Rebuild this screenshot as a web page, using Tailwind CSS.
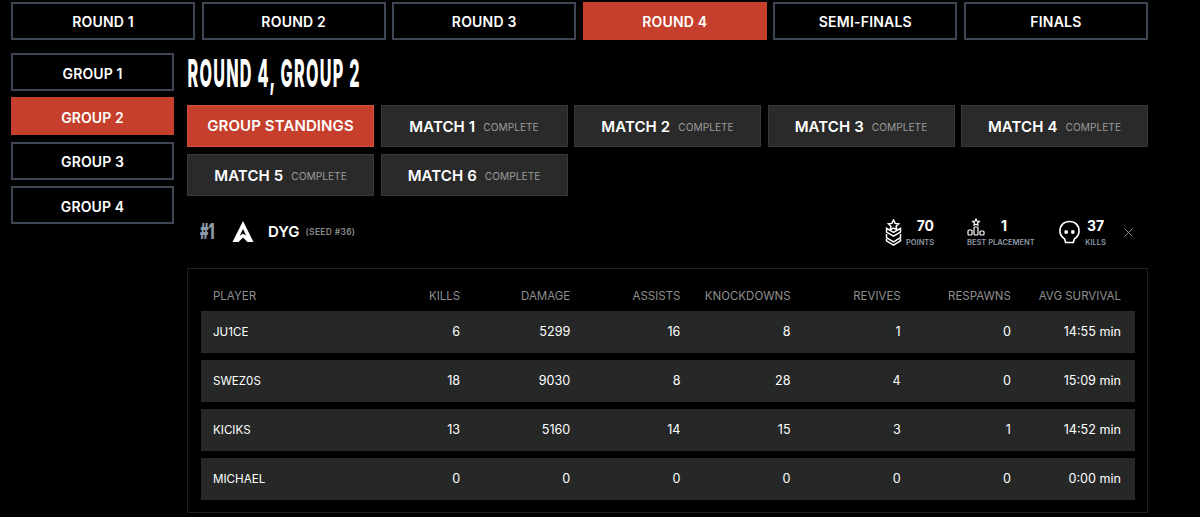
<!DOCTYPE html>
<html lang="en">
<head>
  <meta charset="UTF-8">
  <title>Round 4, Group 2</title>
  <script src="https://cdn.jsdelivr.net/npm/@tailwindcss/browser@4"></script>
</head>
<body class="bg-black text-white font-['Inter',sans-serif] h-[517px] overflow-hidden">
  <div class="w-[1148px] pl-[11px] pt-[2px]">
    <!-- rounds -->
    <nav class="grid grid-cols-6 gap-[6.4px] text-[14px] font-semibold tracking-[0.2px]">
      <a class="h-[38px] pt-[1px] flex items-center justify-center border-2 border-[#3e4653]">ROUND 1</a>
      <a class="h-[38px] pt-[1px] flex items-center justify-center border-2 border-[#3e4653]">ROUND 2</a>
      <a class="h-[38px] pt-[1px] flex items-center justify-center border-2 border-[#3e4653]">ROUND 3</a>
      <a class="h-[38px] pt-[1px] flex items-center justify-center bg-[#c63f2c]">ROUND 4</a>
      <a class="h-[38px] pt-[1px] flex items-center justify-center border-2 border-[#3e4653]">SEMI-FINALS</a>
      <a class="h-[38px] pt-[1px] flex items-center justify-center border-2 border-[#3e4653]">FINALS</a>
    </nav>

    <div class="flex mt-[13px]">
      <!-- groups -->
      <aside class="w-[163px] shrink-0 flex flex-col gap-[6.4px] text-[14px] font-semibold tracking-[0.1px]">
        <a class="h-[38px] pt-[2px] flex items-center justify-center border-2 border-[#3e4653]">GROUP 1</a>
        <a class="h-[38px] pt-[2px] flex items-center justify-center bg-[#c63f2c]">GROUP 2</a>
        <a class="h-[38px] pt-[2px] flex items-center justify-center border-2 border-[#3e4653]">GROUP 3</a>
        <a class="h-[38px] pt-[2px] flex items-center justify-center border-2 border-[#3e4653]">GROUP 4</a>
      </aside>

      <main class="flex-1 ml-[13px]">
        <h1 class="h-[52px] pl-[1px] font-extrabold text-[38px] leading-[41px] tracking-[3px] whitespace-nowrap origin-left scale-x-[0.425]">ROUND 4, GROUP 2</h1>

        <!-- matches -->
        <div class="grid grid-cols-5 gap-x-[6.5px] gap-y-[7px] text-[15px] font-semibold tracking-[0.1px]">
          <a class="h-[42px] pt-[1px] flex items-center justify-center bg-[#c63f2c] border border-[#d5513d]">GROUP STANDINGS</a>
          <a class="h-[42px] pt-[2px] flex items-center justify-center gap-[8px] bg-[#2a2a2a] border border-[#383838]">MATCH 1 <span class="mt-[2px] text-[10.2px] font-normal tracking-normal text-[#9a9a9a]">COMPLETE</span></a>
          <a class="h-[42px] pt-[2px] flex items-center justify-center gap-[8px] bg-[#2a2a2a] border border-[#383838]">MATCH 2 <span class="mt-[2px] text-[10.2px] font-normal tracking-normal text-[#9a9a9a]">COMPLETE</span></a>
          <a class="h-[42px] pt-[2px] flex items-center justify-center gap-[8px] bg-[#2a2a2a] border border-[#383838]">MATCH 3 <span class="mt-[2px] text-[10.2px] font-normal tracking-normal text-[#9a9a9a]">COMPLETE</span></a>
          <a class="h-[42px] pt-[2px] flex items-center justify-center gap-[8px] bg-[#2a2a2a] border border-[#383838]">MATCH 4 <span class="mt-[2px] text-[10.2px] font-normal tracking-normal text-[#9a9a9a]">COMPLETE</span></a>
          <a class="h-[42px] pt-[2px] flex items-center justify-center gap-[8px] bg-[#2a2a2a] border border-[#383838]">MATCH 5 <span class="mt-[2px] text-[10.2px] font-normal tracking-normal text-[#9a9a9a]">COMPLETE</span></a>
          <a class="h-[42px] pt-[2px] flex items-center justify-center gap-[8px] bg-[#2a2a2a] border border-[#383838]">MATCH 6 <span class="mt-[2px] text-[10.2px] font-normal tracking-normal text-[#9a9a9a]">COMPLETE</span></a>
        </div>

        <!-- team summary -->
        <div class="h-[72px] flex items-center pl-[13px]">
          <span class="w-[32px] font-black text-[21px] text-[#8d99a8] origin-left scale-x-[0.62]">#1</span>
          <svg class="w-[22px] h-[22px]" viewBox="0 0 22 22" fill="#fff"><path d="M11 0 L21.5 21 L15.5 21 L11 16.5 L6.5 21 L0.5 21 Z M11 8 L7.8 14.5 L11 12.8 L14.2 14.5 Z" fill-rule="evenodd"/></svg>
          <span class="ml-[14px] text-[15px] font-semibold">DYG</span>
          <span class="ml-[6px] text-[8.5px] font-semibold text-[#8d8d8d] tracking-[0.3px]">(SEED #36)</span>

          <div class="ml-auto flex items-center">
            <svg class="w-[17px] h-[27px]" viewBox="0 0 17 29" fill="none" stroke="#fff" stroke-width="1.6"><path d="M8.5 1 L10.3 4.7 L14 5.2 L11.3 7.8 L12 11.5 L8.5 9.7 L5 11.5 L5.7 7.8 L3 5.2 L6.7 4.7 Z"/><path d="M1 10 L1 14 L8.5 18.5 L16 14 L16 10 L8.5 14.5 Z"/><path d="M1 16 L1 20 L8.5 24.5 L16 20 L16 16"/><path d="M1 21 L1 23.5 L8.5 28 L16 23.5 L16 21"/></svg>
            <div class="w-[28px] ml-[4px] text-right">
              <div class="text-[14px] leading-[17px] font-bold">70</div>
              <div class="mt-[4px] text-[7.5px] leading-[10px] font-semibold text-[#8d99a8]">POINTS</div>
            </div>
            <div class="ml-[33px] w-[68px] relative h-[31px]">
              <svg class="absolute left-0 top-[1px] w-[18px] h-[18px]" viewBox="0 0 18 18" fill="none" stroke="#fff" stroke-width="1.2"><path d="M9 1 L10 3.2 L12.3 3.4 L10.6 5 L11 7.2 L9 6.1 L7 7.2 L7.4 5 L5.7 3.4 L8 3.2 Z"/><rect x="1" y="12" width="4" height="5" rx="1"/><rect x="7" y="9" width="4" height="8" rx="1"/><rect x="13" y="13" width="4" height="4" rx="1"/></svg>
              <div class="absolute left-[34px] top-0 text-[14px] leading-[17px] font-bold">1</div>
              <div class="absolute left-0 top-[21px] whitespace-nowrap text-[7.5px] leading-[10px] font-semibold text-[#8d99a8]">BEST PLACEMENT</div>
            </div>
            <svg class="ml-[24px] w-[21px] h-[24px]" viewBox="0 0 22 24" fill="none"><path d="M11 1 C5 1 1 5 1 11 C1 15 3 17.5 6 19.5 L7 23 L15 23 L16 19.5 C19 17.5 21 15 21 11 C21 5 17 1 11 1 Z" stroke="#fff" stroke-width="1.7"/><circle cx="7.5" cy="12" r="2" fill="#fff"/><circle cx="14.5" cy="12" r="2" fill="#fff"/></svg>
            <div class="w-[21px] ml-[5px] text-center">
              <div class="text-[14px] leading-[17px] font-bold">37</div>
              <div class="mt-[4px] text-[7.5px] leading-[10px] font-semibold text-[#8d99a8]">KILLS</div>
            </div>
            <svg class="ml-[18px] mr-[15px] w-[9px] h-[9px]" viewBox="0 0 9 9" stroke="#8f8f8f" stroke-width="1"><path d="M0.5 0.5 L8.5 8.5 M8.5 0.5 L0.5 8.5"/></svg>
          </div>
        </div>

        <!-- player stats -->
        <div class="h-[245px] border border-[#1f1f1f] pl-[13px] pr-[12px] text-[12.6px]">
          <div class="h-[42px] pt-[14px] grid grid-cols-[137px_repeat(7,110.15px)] items-center px-[12px] text-right text-[#8f8f8f] text-[11.5px]">
            <div class="text-left">PLAYER</div><div>KILLS</div><div>DAMAGE</div><div>ASSISTS</div><div>KNOCKDOWNS</div><div>REVIVES</div><div>RESPAWNS</div><div>AVG SURVIVAL</div>
          </div>
          <div class="flex flex-col gap-[7px]">
            <div class="h-[42px] grid grid-cols-[137px_repeat(7,110.15px)] items-center px-[12px] text-right bg-[#262828]">
              <div class="pt-[1px] text-left text-[11.6px]">JU1CE</div><div>6</div><div>5299</div><div>16</div><div>8</div><div>1</div><div>0</div><div>14:55 min</div>
            </div>
            <div class="h-[42px] grid grid-cols-[137px_repeat(7,110.15px)] items-center px-[12px] text-right bg-[#262828]">
              <div class="pt-[1px] text-left text-[11.6px]">SWEZ0S</div><div>18</div><div>9030</div><div>8</div><div>28</div><div>4</div><div>0</div><div>15:09 min</div>
            </div>
            <div class="h-[42px] grid grid-cols-[137px_repeat(7,110.15px)] items-center px-[12px] text-right bg-[#262828]">
              <div class="pt-[1px] text-left text-[11.6px]">KICIKS</div><div>13</div><div>5160</div><div>14</div><div>15</div><div>3</div><div>1</div><div>14:52 min</div>
            </div>
            <div class="h-[42px] grid grid-cols-[137px_repeat(7,110.15px)] items-center px-[12px] text-right bg-[#262828]">
              <div class="pt-[1px] text-left text-[11.6px]">MICHAEL</div><div>0</div><div>0</div><div>0</div><div>0</div><div>0</div><div>0</div><div>0:00 min</div>
            </div>
          </div>
        </div>
      </main>
    </div>
  </div>
</body>
</html>
